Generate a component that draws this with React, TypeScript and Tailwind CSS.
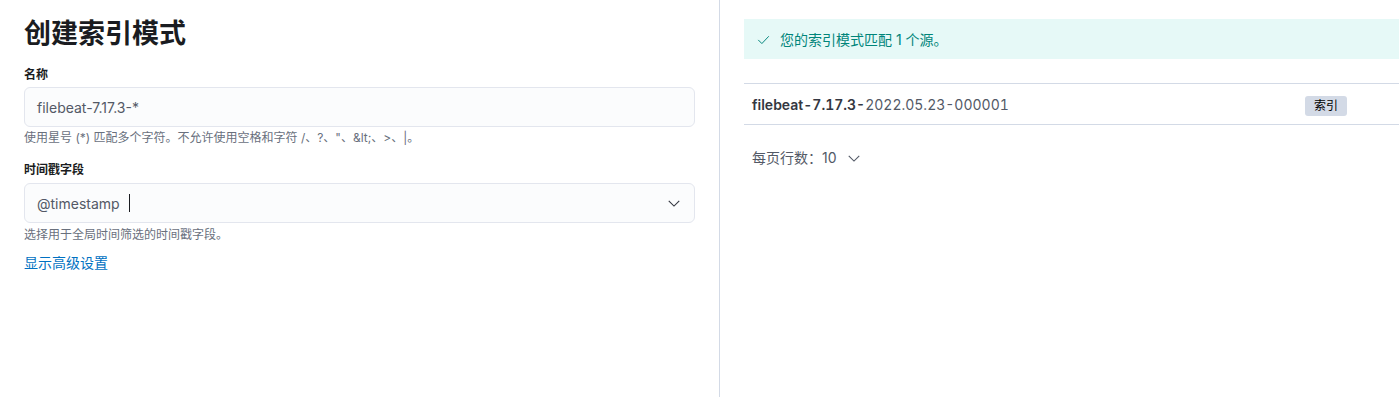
import React from "react";

const FONT = { fontFamily: 'Inter, "Noto Sans CJK SC", sans-serif' };

function Chevron({ className = "" }: { className?: string }) {
  return (
    <svg width="14" height="14" viewBox="0 0 16 16" className={className} fill="none">
      <path d="M2 5.5l6 6 6-6" stroke="currentColor" strokeWidth="1.3" strokeLinejoin="miter" />
    </svg>
  );
}

export default function App() {
  return (
    <div className="flex w-[1399px] h-[397px] bg-white text-[#343741]" style={FONT}>
      {/* Left panel */}
      <div className="w-[720px] shrink-0 border-r border-[#d3dae6] pl-6 pr-6 pt-4">
        <h1 className="text-[27px] leading-[36px] font-bold text-[#1a1c21]">创建索引模式</h1>

        <div className="mt-[13px] text-[12px] leading-[20px] font-semibold text-[#1a1c21]">名称</div>
        <div className="mt-[2px] h-[40px] w-[671px] rounded-[6px] border border-[#e3e6ee] bg-[#fbfcfd] flex items-center px-3 text-[14px] text-[#535966]">
          filebeat-7.17.3-*
        </div>
        <div className="mt-[4px] text-[12px] leading-[14px] text-[#69707d]">
          使用星号 (*) 匹配多个字符。不允许使用空格和字符 /、?、"、&amp;lt;、&gt;、|。
        </div>

        <div className="mt-[15px] text-[12px] leading-[20px] font-semibold text-[#1a1c21]">时间戳字段</div>
        <div className="mt-[3px] h-[40px] w-[671px] rounded-[6px] border border-[#e3e6ee] bg-[#fbfcfd] flex items-center px-3 text-[14px] text-[#535966]">
          <span>@timestamp</span>
          <span className="ml-[9px] inline-block w-px h-[18px] bg-[#1a1c21]" />
          <span className="flex-1" />
          <Chevron className="text-[#343741] mr-[1px]" />
        </div>
        <div className="mt-[5px] text-[12px] leading-[14px] text-[#69707d]">选择用于全局时间筛选的时间戳字段。</div>

        <div className="mt-[11px] text-[14px] leading-[20px] text-[#0071c2]">显示高级设置</div>
      </div>

      {/* Right panel */}
      <div className="flex-1 pl-6 pt-[19px]">
        <div className="h-[40px] bg-[#e6f9f7] flex items-center pl-3 text-[14px] text-[#00857a]">
          <svg width="13" height="13" viewBox="0 0 16 16" fill="none" className="ml-[1px]">
            <path d="M1.5 8.5l4.5 4.5 8.5-9" stroke="currentColor" strokeWidth="1.2" />
          </svg>
          <span className="ml-[10px]">您的索引模式匹配 1 个源。</span>
        </div>

        <div className="mt-6 border-t border-b border-[#d3dae6] h-[42px] flex items-center">
          <div className="flex-1 pl-2 text-[14px] text-[#535966] tabular-nums">
            <span className="font-semibold text-[#343741]">filebeat-7.17.3-</span>
            <span>2022.05.23-000001</span>
          </div>
          <div className="w-[94px] shrink-0">
            <span className="inline-block rounded-[3px] bg-[#d3dae6] px-[9px] text-[12px] leading-[20px] text-[#000000]">索引</span>
          </div>
        </div>

        <div className="mt-[23px] pl-2 flex items-center text-[14px] leading-[20px] text-[#535966]">
          <span>每页行数：10</span>
          <Chevron className="ml-[10px] text-[#535966]" />
        </div>
      </div>
    </div>
  );
}
